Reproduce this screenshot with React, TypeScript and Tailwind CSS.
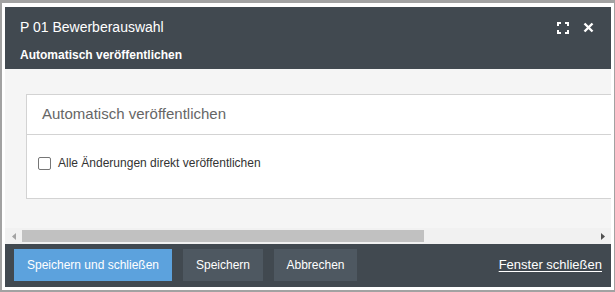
export default function App() {
  return (
    <div
      className="w-[615px] h-[292px] bg-[#a2a2a2] overflow-hidden pt-[3px] pl-[2px]"
      style={{ fontFamily: '"Liberation Sans", Arial, sans-serif' }}
    >
      <div className="w-[612px] h-[287px] bg-white border-white border-x-[3px] border-t-[4px] border-b-[3px] flex flex-col">
        {/* header */}
        <div className="h-[62px] shrink-0 bg-[#414950] text-white flex flex-col px-[15px]">
          <div className="flex items-center justify-between h-[40px] pt-[1px]">
            <span className="text-[14px]">P 01 Bewerberauswahl</span>
            <div className="flex items-center gap-[14px] pr-[2px]">
              <svg width="12" height="12" viewBox="0 0 12 12" fill="none" stroke="white" strokeWidth="2">
                <path d="M1 4V1h3M8 1h3v3M11 8v3H8M4 11H1V8" />
              </svg>
              <svg width="11" height="11" viewBox="0 0 11 11" fill="none" stroke="white" strokeWidth="2.4">
                <path d="M1.5 1.5l8 8M9.5 1.5l-8 8" />
              </svg>
            </div>
          </div>
          <div className="text-[12px] font-bold leading-none pt-[2px]">Automatisch veröffentlichen</div>
        </div>

        {/* content */}
        <div className="flex-1 bg-[#f5f5f5] pt-[25px] pl-[21px] overflow-hidden">
          <div className="bg-white border border-r-0 border-[#d3d3d3] h-[105px] w-[700px]">
            <div className="h-[40px] border-b border-[#d3d3d3] flex items-center pl-[15px]">
              <span className="text-[15px] text-[#666666]">Automatisch veröffentlichen</span>
            </div>
            <div className="flex items-center pl-[11px] pt-[19px]">
              <span className="w-[13px] h-[13px] border border-[#767676] rounded-[2px] bg-white" />
              <span className="ml-[7px] text-[12px] text-[#333333]">Alle Änderungen direkt veröffentlichen</span>
            </div>
          </div>
        </div>

        {/* scrollbar */}
        <div className="h-[16px] shrink-0 bg-[#f1f1f1] flex items-center">
          <div className="w-[17px] flex justify-center">
            <svg width="4" height="7" viewBox="0 0 4 7">
              <path d="M4 0v7L0 3.5z" fill="#a3a3a3" />
            </svg>
          </div>
          <div className="w-[402px] h-[12px] bg-[#c1c1c1]" />
          <div className="flex-1" />
          <div className="w-[17px] flex justify-center">
            <svg width="4" height="7" viewBox="0 0 4 7">
              <path d="M0 0v7L4 3.5z" fill="#505050" />
            </svg>
          </div>
        </div>

        {/* footer */}
        <div className="h-[43px] shrink-0 bg-[#414950] flex items-center pl-[9px] pr-[9px] pb-[1px]">
          <button className="h-[32px] w-[158px] bg-[#5ca2dd] text-white text-[12px]">Speichern und schließen</button>
          <button className="ml-[11px] h-[32px] w-[80px] bg-[#4e5861] text-white text-[12px]">Speichern</button>
          <button className="ml-[11px] h-[32px] w-[83px] bg-[#4e5861] text-white text-[12px]">Abbrechen</button>
          <div className="flex-1" />
          <a className="text-white text-[13px] underline underline-offset-2">Fenster schließen</a>
        </div>
      </div>
    </div>
  );
}
